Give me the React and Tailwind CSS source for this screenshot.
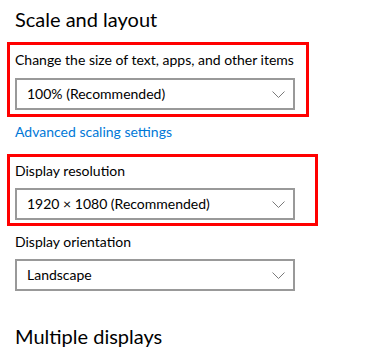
const font = { fontFamily: 'Lato, "Noto Sans", sans-serif' };

function Chevron() {
  return (
    <svg width="13" height="7" viewBox="0 0 13 7" fill="none" className="shrink-0">
      <path d="M0.5 0.5 L6.5 6.5 L12.5 0.5" stroke="#7a7a7a" strokeWidth="1" />
    </svg>
  );
}

function Select({ value }) {
  return (
    <div className="w-[280px] h-[32px] border-2 border-[#999999] flex items-center justify-between pl-[10px] pr-[8px] text-[14px] leading-[20px] text-black">
      <span>{value}</span>
      <Chevron />
    </div>
  );
}

export default function App() {
  return (
    <div className="w-[383px] h-[360px] bg-white overflow-hidden pl-[7px] text-black" style={font}>
      <div className="pl-[8px] mt-[5px] text-[20px] leading-[28px]">Scale and layout</div>

      <div className="mt-[9px] w-[302px] border-[3px] border-[#ff0000] pl-[5px] pt-[5px] pb-[4px]">
        <div className="text-[14px] leading-[20px] whitespace-nowrap">Change the size of text, apps, and other items</div>
        <div className="mt-[8px]">
          <Select value="100% (Recommended)" />
        </div>
      </div>

      <div className="pl-[8px] mt-[5px] text-[14px] leading-[20px] text-[#0078d7]">Advanced scaling settings</div>

      <div className="mt-[12px] w-[311px] border-[3px] border-[#ff0000] pl-[5px] pt-[4px] pb-[3px]">
        <div className="text-[14px] leading-[20px]">Display resolution</div>
        <div className="mt-[7px]">
          <Select value="1920 × 1080 (Recommended)" />
        </div>
      </div>

      <div className="pl-[8px] mt-[6px] text-[14px] leading-[20px]">Display orientation</div>
      <div className="pl-[8px] mt-[7px]">
        <Select value="Landscape" />
      </div>

      <div className="pl-[8px] mt-[31px] text-[20px] leading-[28px]">Multiple displays</div>
    </div>
  );
}
